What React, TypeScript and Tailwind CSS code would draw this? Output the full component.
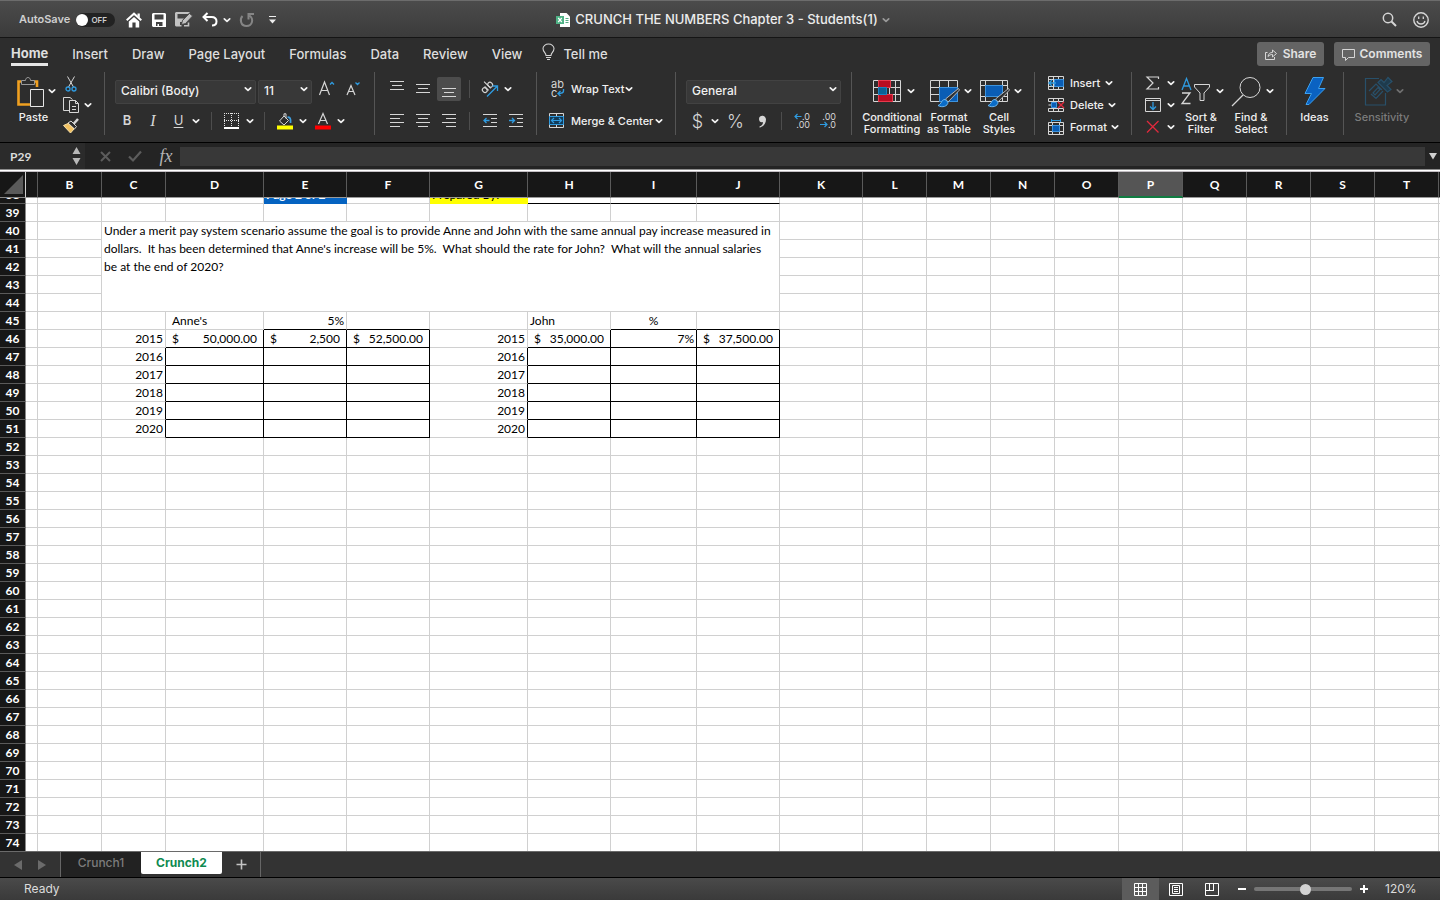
import React, { useState } from 'react';

interface IconProps {
  w: number;
  h: number;
  className?: string;
  children: React.ReactNode;
}

const Icon: React.FC<IconProps> = ({ w, h, className = '', children }) => (
  <svg width={w} height={h} viewBox={`0 0 ${w} ${h}`} fill="none" stroke="#d6d6d6" className={`shrink-0 overflow-visible ${className}`} aria-hidden="true">
    {children}
  </svg>
);

const Chevron: React.FC<{ className?: string; color?: string }> = ({ className = '', color = '#f2f2f2' }) => (
  <Icon w={12} h={8} className={className}>
    <path d="M3.3 2.8 L6 5.4 L8.7 2.8" stroke={color} strokeWidth="1.7" strokeLinecap="round" strokeLinejoin="round" />
  </Icon>
);

const Divider: React.FC<{ className?: string }> = ({ className = '' }) => (
  <span className={`w-px h-[18px] bg-[#4d4d4d] shrink-0 ${className}`} />
);

const Group: React.FC<{ className: string; children: React.ReactNode }> = ({ className, children }) => (
  <div className={`flex shrink-0 h-[63px] pt-[5px] border-[#555] ${className}`}>{children}</div>
);

interface BigButtonProps {
  label: string[];
  icon: React.ReactNode;
  className: string;
  iconClass?: string;
  disabled?: boolean;
}

// tall ribbon button: icon with drop arrow on top, one or two lines of label below
const BigButton: React.FC<BigButtonProps> = ({ label, icon, className, iconClass = '', disabled }) => (
  <button disabled={disabled} className={`flex flex-col shrink-0 items-center ${className}`}>
    <span className={`flex items-start h-[34px] ${iconClass}`}>{icon}</span>
    {label.map((line) => (
      <span key={line} className={`text-[11px] leading-[12px] font-medium whitespace-nowrap ${disabled ? 'text-[#7c7c7c]' : 'text-[#f0f0f0]'}`}>
        {line}
      </span>
    ))}
  </button>
);

const Brush = () => (
  <>
    <path d="M28.5 8.5 L15.5 19 L18 22 L29.5 10 Z" fill="#2d2d2d" stroke="#b5b5b5" />
    <path d="M15 19.5 C11 19.5 12 24 8 25.5 C12 28 18 26.5 18 22 Z" fill="#0a6cc8" stroke="#6cb6ee" />
  </>
);

const TABS = ['Home', 'Insert', 'Draw', 'Page Layout', 'Formulas', 'Data', 'Review', 'View'];

const TitleBar = () => (
  <header className="flex items-center h-[38px] pt-px shrink-0 border-t border-t-[#6c6c6c] border-b border-b-[#151515] bg-gradient-to-b from-[#4b4b4b] to-[#3b3b3b]">
    <div className="flex flex-1 items-center pl-[19px]">
      <span id="autosave" className="w-[57px] text-[11px] font-semibold text-[#cfcfcf]">AutoSave</span>
      <button role="switch" aria-checked="false" aria-labelledby="autosave" className="flex items-center justify-between w-[39px] h-[14px] pr-[8px] rounded-full bg-[#222]">
        <span className="size-[12px] rounded-full bg-white" />
        <span className="text-[8px] font-semibold text-[#cfcfcf]">OFF</span>
      </button>
      <button aria-label="Home" className="ml-[11px]">
        <Icon w={16} h={16}>
          <path d="M0.7 8.2 L8 1.7 L15.3 8.2" stroke="#fff" strokeWidth="2" />
          <path d="M11.500 1.500 H13.800 V6 L11.500 4 Z M2.800 9.500 L8 5 L13.200 9.500 V15.500 H9.600 V10.500 H6.400 V15.500 H2.800 Z" fill="#fff" stroke="none" />
        </Icon>
      </button>
      <button aria-label="Save" className="ml-[10px]">
        <Icon w={14} h={14}>
          <path fillRule="evenodd" d="M1 0 H13 L14 1 V14 H1 L0 13 V1 Z M2.5 1.5 V6.5 H11.5 V1.5 Z M4 9 V13 H5.5 V11 H7 V13 H10.500 V9 Z" fill="#fff" stroke="none" />
        </Icon>
      </button>
      <button aria-label="Save as" className="ml-[9px]">
        <Icon w={18} h={15}>
          <path fillRule="evenodd" d="M1 0 H15 L13 2 H2.500 V6.500 H9 L7 8.500 V10 H5 V13 H6.500 V14.500 H1 L0 13.500 V1 Z" fill="#c2c2c2" stroke="none" />
          <path d="M13.500 10.500 V13.700 H9" stroke="#c2c2c2" strokeWidth="1.600" />
          <path d="M6.500 12.500 L7.500 8.500 L14.500 1.500 L17.500 4 L10.500 11.500 Z" fill="#c2c2c2" stroke="#444" strokeWidth="0.800" />
        </Icon>
      </button>
      <button aria-label="Undo" className="ml-[9px]">
        <Icon w={16} h={15}>
          <path d="M5.500 1 L1.500 5 L5.500 9 M2 5 H9.500 C13 5 14.500 7 14.500 9.500 C14.500 12 13 13.500 10 13.500" stroke="#fff" strokeWidth="2" />
        </Icon>
      </button>
      <button aria-label="Undo history" className="ml-[3px]"><Chevron /></button>
      <button aria-label="Redo" className="ml-[6px]">
        <Icon w={16} h={16}>
          <path d="M3.500 4 C0.500 7 1.500 14 7.500 14 C13.500 14 15 7 10.500 3.500 M9.500 7.500 V2 H15" stroke="#858585" strokeWidth="2" />
        </Icon>
      </button>
      <button aria-label="Customize toolbar" className="ml-[13px]">
        <Icon w={9} h={8}>
          <path d="M1 0.500 H8" stroke="#eee" />
          <path d="M1 3.500 H8 L4.500 7.500 Z" fill="#eee" stroke="none" />
        </Icon>
      </button>
    </div>
    <h1 className="flex items-center text-[13px] font-medium text-[#ececec] whitespace-nowrap">
      <Icon w={14} h={14} className="mr-[5px]">
        <path d="M4 0 H10.500 L14 3.500 V14 H4 Z" fill="#fff" stroke="none" />
        <path d="M9.500 5.500 H12.500 M9.500 7.500 H12.500 M9.500 9.500 H12.500" stroke="#55ab83" />
        <path d="M0 3 H8 V11 H0 Z" fill="#4fb386" stroke="none" />
        <path d="M2.200 5 L5.800 9 M5.800 5 L2.200 9" stroke="#fff" strokeWidth="1.200" />
      </Icon>
      CRUNCH THE NUMBERS Chapter 3 - Students(1)
      <Chevron className="ml-[2px]" color="#9a9a9a" />
    </h1>
    <div className="flex flex-1 items-center justify-end gap-[16px] pr-[11px]">
      <button aria-label="Search">
        <Icon w={15} h={15}>
          <circle cx="6" cy="6" r="4.700" strokeWidth="1.500" />
          <path d="M9.500 9.500 L14 14" strokeWidth="2" />
        </Icon>
      </button>
      <button aria-label="Feedback">
        <Icon w={16} h={16}>
          <circle cx="8" cy="8" r="7.200" strokeWidth="1.400" />
          <path d="M5.700 4.500 V7 M10.300 4.500 V7" strokeWidth="1.300" />
          <path d="M4 9 C5 13 11 13 12 9" strokeWidth="1.300" />
        </Icon>
      </button>
    </div>
  </header>
);

const TabRow: React.FC<{ tab: string; setTab: (tab: string) => void }> = ({ tab, setTab }) => (
  <nav className="flex items-start h-[34px] pt-[4px] pl-[11px] pr-[10px] shrink-0">
    <div className="flex flex-1 gap-6 text-[13px] leading-[23px] text-[#dedede]">
      {TABS.map((name) => (
        <button
          key={name}
          onClick={() => setTab(name)}
          className={`whitespace-nowrap ${tab === name ? 'font-bold border-b-[3px] border-[#e6e6e6] box-content h-[21px]' : 'font-medium h-[24px]'}`}
        >
          {name}
        </button>
      ))}
      <button className="flex items-center gap-[8px] h-[24px] -ml-1 font-medium">
        <Icon w={13} h={18} className="mb-[4px]">
          <path d="M4 12.500 C4 9.500 1 9 1 5.500 C1 3 3.500 1 6.500 1 C9.500 1 12 3 12 5.500 C12 9 9 9.500 9 12.500 Z M4 14.500 H9 M5 16.500 H8" strokeWidth="1.100" />
        </Icon>
        Tell me
      </button>
    </div>
    <div className="flex gap-[10px] text-[12px] font-semibold text-[#e2e2e2]">
      <button className="flex items-center justify-center gap-[6px] w-[67px] h-[24px] rounded-[3px] bg-[#646464]">
        <Icon w={12} h={12}>
          <path d="M2.500 4.500 H0.500 V11.500 H9.500 V9 M3 8.500 C3.500 5.500 5 4.500 7.500 4.500 V2 L11.500 5.500 L7.500 9 V6.500 C5.500 6.500 4.500 7 3 8.500 Z" />
        </Icon>
        Share
      </button>
      <button className="flex items-center justify-center gap-[5px] w-[96px] h-[24px] rounded-[3px] bg-[#646464]">
        <Icon w={13} h={13}>
          <path d="M0.500 1.500 H12.500 V9.500 H6.500 L3.500 12.500 V9.500 H0.500 Z" />
        </Icon>
        Comments
      </button>
    </div>
  </nav>
);

interface SelectProps {
  label: string;
  options: string[];
  className: string;
}

const RibbonSelect: React.FC<SelectProps> = ({ label, options, className }) => (
  <div className={`relative h-[24px] shrink-0 ${className}`}>
    <select aria-label={label} className="appearance-none w-full h-full pl-[5px] pb-[2px] rounded-[2px] border border-[#424242] bg-[#383838] text-[12px] font-medium text-[#f0f0f0]">
      {options.map((o) => <option key={o}>{o}</option>)}
    </select>
    <Chevron className="absolute right-[2px] top-[8px] pointer-events-none" />
  </div>
);

const AlignIcon: React.FC<{ lines: [number, number, number][]; h?: number }> = ({ lines, h = 24 }) => (
  <Icon w={24} h={h}>
    {lines.map(([x1, x2, y]) => <path key={y} d={`M${x1} ${y + 0.5} H${x2}`} />)}
  </Icon>
);

const Ribbon = () => (
  <div className="flex h-[70px] shrink-0 overflow-hidden">
    {/* clipboard */}
    <Group className="w-[105px] border-r">
      <BigButton
        className="w-[57px] pl-[10px]"
        iconClass="w-full pl-[7px]"
        label={['Paste']}
        icon={
          <>
            <Icon w={28} h={31}>
              <path d="M4 4.500 H1.500 V27.500 H13 M17 4.500 H20 V10" stroke="#f0a020" strokeWidth="2.600" />
              <path d="M4.500 7.500 V3.500 H8.500 C8.500 -0.500 13.500 -0.500 13.500 3.500 H17.500 V7.500 Z" fill="#2d2d2d" stroke="#9a9a9a" />
              <path d="M13.500 12.500 H26.500 V29.500 H13.500 Z" fill="#2d2d2d" stroke="#e6e6e6" />
            </Icon>
            <Chevron className="mt-[10px] ml-[1px]" />
          </>
        }
      />
      <div className="flex flex-col items-start w-[47px] pl-[5px] -mt-[4px]">
        <button aria-label="Cut" className="flex items-center shrink-0 h-[21px] pl-[3px]">
          <Icon w={12} h={16}>
            <path d="M2.500 0.500 L8.500 11 M9.500 0.500 L3.500 11" />
            <circle cx="3" cy="13" r="2" stroke="#2f9be0" strokeWidth="1.300" />
            <circle cx="9" cy="13" r="2" stroke="#2f9be0" strokeWidth="1.300" />
          </Icon>
        </button>
        <button aria-label="Copy" className="flex items-center shrink-0 h-[21px] pl-[1px]">
          <Icon w={17} h={17}>
            <path d="M6 14.500 H0.500 V1.500 H7 L9.500 3.500" />
            <path d="M6.500 4.500 H12.500 L15.500 7.500 V16.500 H6.500 Z M12.500 4.500 V7.500 H15.500 M9 10.500 H13 M9 13.500 H13" fill="#2d2d2d" />
          </Icon>
          <Chevron className="ml-[2px]" />
        </button>
        <button aria-label="Format painter" className="flex items-center shrink-0 h-[21px] pl-[1px]">
          <Icon w={16} h={16}>
            <path d="M15 1 L10 6.500" strokeWidth="2.500" />
            <path d="M5 5 L11.500 11 L13.500 8.500 L8 3 Z" fill="#2d2d2d" />
            <path d="M5 5.500 L0.500 7.500 L7.500 15 L11 11 Z" fill="#f3c262" stroke="#f7e0a8" />
          </Icon>
        </button>
      </div>
    </Group>

    {/* font */}
    <Group className="w-[270px] flex-col gap-[8px] pl-[10px] border-r">
      <div className="flex items-center h-[24px]">
        <RibbonSelect label="Font" className="w-[141px]" options={['Calibri (Body)', 'Arial']} />
        <RibbonSelect label="Font size" className="w-[54px] ml-[2px]" options={['11', '12', '14']} />
        <button aria-label="Increase font size" className="flex ml-[7px]">
          <Icon w={16} h={16}>
            <path d="M0.500 14 L5.500 1 L10.500 14 M2.500 9.500 H8.500" strokeWidth="1.200" />
            <path d="M11 3.500 L13 1.500 L15 3.500" stroke="#2f9be0" strokeWidth="1.300" />
          </Icon>
        </button>
        <button aria-label="Decrease font size" className="flex ml-[11px]">
          <Icon w={16} h={16}>
            <path d="M1 14 L5 4.500 L9 14 M2.500 10.500 H7.500" strokeWidth="1.200" />
            <path d="M9.500 1.500 L11.500 3.500 L13.500 1.500" stroke="#2f9be0" strokeWidth="1.300" />
          </Icon>
        </button>
      </div>
      <div className="flex items-center h-[24px] text-[13px] text-[#d6d6d6]">
        <button className="w-[24px] font-semibold">B</button>
        <button className="w-[28px] italic font-['Liberation_Serif',serif] text-[16px]">I</button>
        <button className="w-[23px] underline underline-offset-2">U</button>
        <button aria-label="Underline style"><Chevron /></button>
        <Divider className="ml-[9px]" />
        <button aria-label="Borders" className="ml-[12px]">
          <Icon w={16} h={16}>
            <path d="M0.500 0 V14 M14.500 0 V14 M7.500 0 V14 M0 0.500 H15 M0 7.500 H15" strokeDasharray="1 1" stroke="#e6e6e6" />
            <path d="M0 15 H15" stroke="#fff" strokeWidth="2" />
          </Icon>
        </button>
        <button aria-label="Border style" className="ml-1"><Chevron /></button>
        <Divider className="ml-2" />
        <button aria-label="Fill color" className="ml-3">
          <Icon w={16} h={16}>
            <path d="M7 3 L2.500 8 L7 12 L11.500 7.500 L7 3 V0.800 H9 V5.500" />
            <path d="M10.500 4.500 C13 3.500 14 6 13.500 10" stroke="#3e9fe0" strokeWidth="1.800" />
            <path d="M0 12.500 H16 V16.500 H0 Z" fill="#ff0" stroke="none" />
          </Icon>
        </button>
        <button aria-label="Fill palette" className="ml-1"><Chevron /></button>
        <button aria-label="Font color" className="ml-1.5">
          <Icon w={16} h={16}>
            <path d="M3.500 11 L8 0.500 L12.500 11 M5 7.500 H11" strokeWidth="1.200" />
            <path d="M0 12.500 H16 V16.500 H0 Z" fill="#f00" stroke="none" />
          </Icon>
        </button>
        <button aria-label="Font palette" className="ml-1"><Chevron /></button>
      </div>
    </Group>

    {/* alignment */}
    <Group className="w-[162px] flex-col gap-[8px] pl-[10px] border-r">
      <div className="flex items-center h-[24px]">
        <button aria-label="Top align" className="w-[26px]"><AlignIcon lines={[[5, 19, 4], [7, 17, 8], [5, 19, 12]]} /></button>
        <button aria-label="Middle align" className="w-[26px]"><AlignIcon lines={[[5, 19, 7], [7, 17, 11], [5, 19, 15]]} /></button>
        <button aria-label="Bottom align" className="w-[24px] rounded-[2px] bg-[#4c4c4c]"><AlignIcon lines={[[5, 19, 11], [7, 17, 15], [5, 19, 19]]} /></button>
        <Divider className="ml-[8px]" />
        <button aria-label="Orientation" className="ml-[12px]">
          <Icon w={17} h={17}>
            <g transform="rotate(-45 7 7)" strokeWidth="1.100">
              <ellipse cx="2.500" cy="5.500" rx="2.200" ry="2.600" />
              <path d="M5 2.800 V8.500 M8 -1 V8.500" />
              <ellipse cx="10.200" cy="5.500" rx="2.200" ry="2.600" />
            </g>
            <path d="M5 15.500 L15 5.500 M10.500 5 H15.500 V10" stroke="#2f9be0" strokeWidth="1.300" />
          </Icon>
        </button>
        <button aria-label="Orientation options" className="ml-[3px]"><Chevron /></button>
      </div>
      <div className="flex items-center h-[24px]">
        <button aria-label="Align left" className="w-[26px]"><AlignIcon lines={[[5, 19, 5], [5, 15, 9], [5, 19, 13], [5, 15, 17]]} /></button>
        <button aria-label="Center" className="w-[26px]"><AlignIcon lines={[[5, 19, 5], [7, 17, 9], [5, 19, 13], [7, 17, 17]]} /></button>
        <button aria-label="Align right" className="w-[24px]"><AlignIcon lines={[[5, 19, 5], [9, 19, 9], [5, 19, 13], [9, 19, 17]]} /></button>
        <Divider className="ml-[8px]" />
        <button aria-label="Decrease indent" className="ml-[13px]">
          <Icon w={14} h={14}>
            <path d="M0 0.500 H14 M8 4.500 H14 M8 8.500 H14 M0 12.500 H14" />
            <path d="M6.500 6.500 H1 M3.500 4 L1 6.500 L3.500 9" stroke="#2f9be0" strokeWidth="1.300" />
          </Icon>
        </button>
        <button aria-label="Increase indent" className="ml-[12px]">
          <Icon w={14} h={14}>
            <path d="M0 0.500 H14 M8 4.500 H14 M8 8.500 H14 M0 12.500 H14" />
            <path d="M0 6.500 H5.500 M3 4 L5.500 6.500 L3 9" stroke="#2f9be0" strokeWidth="1.300" />
          </Icon>
        </button>
      </div>
    </Group>

    {/* wrap / merge */}
    <Group className="w-[139px] flex-col items-start gap-[8px] pl-[12px] border-r text-[11px] font-medium text-[#f0f0f0]">
      <button className="flex items-center h-[24px] whitespace-nowrap">
        <span className="relative w-[16px] h-[18px] mr-[6px] text-[11px] leading-[9px] font-normal text-left text-[#d6d6d6]">
          <span className="block pl-[2px]">ab</span>
          <span className="block pl-[2px]">c</span>
          <Icon w={16} h={18} className="absolute inset-0">
            <path d="M14.500 9 V11 C14.500 13 13 13.500 9 13.500 M11.500 11 L9 13.500 L11.500 16" stroke="#2f9be0" strokeWidth="1.400" />
          </Icon>
        </span>
        Wrap Text
        <Chevron className="-ml-px" />
      </button>
      <button className="flex items-center h-[24px] whitespace-nowrap">
        <Icon w={16} h={16} className="mr-[6px]">
          <path d="M0.500 0.500 H14.500 V14.500 H0.500 Z M7.500 0.500 V4 M7.500 11 V14.500" />
          <path d="M0.500 3.500 H14.500 V11.500 H0.500 Z" fill="#123a57" stroke="#2f9be0" />
          <path d="M2.500 7.500 H12.500 M5 5 L2.500 7.500 L5 10 M10 5 L12.500 7.500 L10 10" stroke="#2f9be0" strokeWidth="1.200" />
        </Icon>
        Merge &amp; Center
        <Chevron />
      </button>
    </Group>

    {/* number */}
    <Group className="w-[176px] flex-col gap-[8px] pl-[10px] border-r">
      <RibbonSelect label="Number format" className="w-[155px]" options={['General', 'Currency', 'Percentage']} />
      <div className="flex items-center h-[24px] text-[#d6d6d6] text-[18px] font-light">
        <button className="w-[23px]">$</button>
        <button aria-label="Currency options"><Chevron /></button>
        <button className="w-[29px] text-center">%</button>
        <button aria-label="Comma style" className="ml-[8px]">
          <Icon w={9} h={13}>
            <path d="M1 4 C1 -0.500 8 -0.500 8 4.500 C8 9 5 12 1.500 12.500 V11.500 C4 10.500 5 9 5 7 C3 8 1 6.500 1 4 Z" fill="#d6d6d6" stroke="none" />
          </Icon>
        </button>
        <Divider className="ml-[14px]" />
        <button aria-label="Increase decimal" className="relative flex flex-col items-end w-[16px] ml-[12px] text-[9px] leading-[8px] font-normal">
          <span>.0</span>
          <span>.00</span>
          <Icon w={16} h={16} className="absolute inset-0">
            <path d="M7.500 3.500 H1 M3.500 1 L1 3.500 L3.500 6" stroke="#2f9be0" strokeWidth="1.200" />
          </Icon>
        </button>
        <button aria-label="Decrease decimal" className="relative flex flex-col items-end w-[16px] ml-[10px] text-[9px] leading-[8px] font-normal">
          <span>.00</span>
          <span>.0</span>
          <Icon w={16} h={16} className="absolute inset-0">
            <path d="M0 11.500 H7 M4.500 9 L7 11.500 L4.500 14" stroke="#2f9be0" strokeWidth="1.200" />
          </Icon>
        </button>
      </div>
    </Group>

    {/* styles */}
    <Group className="w-[183px] pl-[8px] border-r">
      <BigButton
        className="w-[64px]"
        iconClass="pl-[6px] pt-[3px]"
        label={['Conditional', 'Formatting']}
        icon={
          <>
            <Icon w={28} h={22}>
              <path d="M0.500 0.500 H27.500 V21.500 H0.500 Z M0 7.500 H28 M0 14.500 H28 M5.500 0 V22 M16.500 0 V22 M22.500 0 V22" />
              <path d="M5.500 0.500 H17.500 V7.500 H5.500 Z M5.500 14.500 H19.500 V21.500 H5.500 Z" fill="#b80d22" stroke="#e8394c" />
              <path d="M5.500 7.500 H13.500 V14.500 H5.500 Z" fill="#0c6295" stroke="#1b83c0" />
            </Icon>
            <Chevron className="mt-[7px] ml-[4px]" />
          </>
        }
      />
      <BigButton
        className="w-[50px]"
        iconClass="pl-[6px] pt-[3px]"
        label={['Format', 'as Table']}
        icon={
          <>
            <Icon w={31} h={27}>
              <path d="M0.500 0.500 H27.500 V21.500 H0.500 Z M0 7.500 H28 M0 14.500 H28 M9.500 0 V22 M18.500 0 V22" />
              <path d="M9.500 7.500 H27.500 V21.500 H9.500 Z" fill="#0a5db5" stroke="#3d93dd" />
              <Brush />
            </Icon>
            <Chevron className="mt-[7px] ml-[1px]" />
          </>
        }
      />
      <BigButton
        className="w-[50px]"
        iconClass="pl-[6px] pt-[3px]"
        label={['Cell', 'Styles']}
        icon={
          <>
            <Icon w={31} h={27}>
              <path d="M0.500 0.500 H27.500 V21.500 H0.500 Z M0 5.500 H28 M0 16.500 H28 M5.500 0 V22 M22.500 0 V22" />
              <path d="M5.500 5.500 H22.500 V16.500 H5.500 Z" fill="#0a5db5" stroke="#3d93dd" />
              <Brush />
            </Icon>
            <Chevron className="mt-[7px] ml-[1px]" />
          </>
        }
      />
    </Group>

    {/* cells */}
    <Group className="w-[96px] pl-[13px]">
      <div className="flex flex-col items-start -mt-[5px] text-[11px] font-medium text-[#f0f0f0]">
        <button className="flex items-center shrink-0 h-[22px]">
          <Icon w={16} h={14} className="mr-[6px]">
            <path d="M0.500 0.500 H15.500 V13.500 H0.500 Z M5.500 0 V14 M10.500 0 V14 M0 3.500 H16 M0 10.500 H16" />
            <path d="M6.500 3.500 H15.500 V10.500 H6.500 Z" fill="#0a5db5" stroke="#3d93dd" />
            <path d="M8 7 H1 M4 4 L1 7 L4 10" stroke="#2f9be0" strokeWidth="1.400" />
          </Icon>
          Insert
          <Chevron className="ml-[3px]" />
        </button>
        <button className="flex items-center shrink-0 h-[22px]">
          <Icon w={16} h={14} className="mr-[6px]">
            <path d="M0.500 0.500 H15.500 V3.500 H0.500 Z M0.500 10.500 H15.500 V13.500 H0.500 Z M5.500 0 V4 M10.500 0 V4 M5.500 10 V14 M10.500 10 V14 M0.500 7 H4" />
            <path d="M3.500 4.500 H8.500 V9.500 H3.500 Z" fill="#0a5db5" stroke="#3d93dd" />
            <path d="M10 4 L16 10 M16 4 L10 10" stroke="#e0293d" strokeWidth="1.400" />
          </Icon>
          Delete
          <Chevron className="ml-[2px]" />
        </button>
        <button className="flex items-center shrink-0 h-[22px]">
          <Icon w={16} h={16} className="mr-[6px]">
            <path d="M0.500 3.500 H15.500 V15.500 H0.500 Z M4.500 3 V16 M11.500 3 V16 M0 6.500 H16 M0 12.500 H16" />
            <path d="M4.500 6.500 H11.500 V12.500 H4.500 Z" fill="#0a5db5" stroke="#3d93dd" />
            <path d="M3.500 1.500 H12.500 M3.500 0 V3 M12.500 0 V3" stroke="#2f9be0" />
          </Icon>
          Format
          <Chevron className="ml-[2px]" />
        </button>
      </div>
    </Group>

    {/* editing */}
    <Group className="w-[156px] pl-[13px] border-x">
      <div className="flex flex-col w-[33px] pr-px -mt-[5px]">
        <button aria-label="AutoSum" className="flex items-center justify-between shrink-0 h-[22px]">
          <Icon w={16} h={14}>
            <path d="M13.500 3 V1 H2 L8 7 L2 13 H13.500 V11" strokeWidth="1.200" />
          </Icon>
          <Chevron />
        </button>
        <button aria-label="Fill" className="flex items-center justify-between shrink-0 h-[22px]">
          <Icon w={16} h={14}>
            <path d="M0.500 0.500 H15.500 V13.500 H0.500 Z M0 2.500 H16" />
            <path d="M8 4 V11.500 M5 8.500 L8 11.500 L11 8.500" stroke="#2f9be0" strokeWidth="1.300" />
          </Icon>
          <Chevron />
        </button>
        <button aria-label="Clear" className="flex items-center justify-between shrink-0 h-[22px]">
          <Icon w={16} h={14}>
            <path d="M2 1 L13.500 12.500 M13.500 1 L2 12.500" stroke="#e0293d" strokeWidth="1.300" />
          </Icon>
          <Chevron />
        </button>
      </div>
      <BigButton
        className="w-[46px]"
        iconClass="pl-[4px]"
        label={['Sort &', 'Filter']}
        icon={
          <>
            <Icon w={30} h={28}>
              <path d="M1 13 L5.500 1.500 L10 13 M2.500 9 H8.500" stroke="#2f9be0" strokeWidth="1.300" />
              <path d="M1 16 H9 L1 26.500 H9.500" strokeWidth="1.300" />
              <path d="M13.500 7.500 H28.500 V10 L23 16 V23.500 H19 V16 L13.500 10 Z" />
            </Icon>
            <Chevron className="mt-[10px] ml-[3px]" />
          </>
        }
      />
      <BigButton
        className="w-[54px]"
        iconClass="pl-[5px]"
        label={['Find &', 'Select']}
        icon={
          <>
            <Icon w={30} h={30}>
              <circle cx="18" cy="10.500" r="10" />
              <path d="M11 18 L0 29" strokeWidth="1.300" />
            </Icon>
            <Chevron className="mt-[10px] ml-[2px]" />
          </>
        }
      />
    </Group>

    {/* ideas */}
    <Group className="w-[57px] border-r">
      <BigButton
        className="w-[55px]"
        label={['Ideas']}
        icon={
          <Icon w={22} h={29}>
            <path d="M9 0.500 H19.500 L14.500 11.500 H21 L5 27.500 H2 L7.500 16.500 H1 Z" fill="#0a62c2" stroke="#3ba1f0" />
          </Icon>
        }
      />
    </Group>

    {/* sensitivity */}
    <Group className="w-[77px]">
      <BigButton
        className="w-[76px]"
        iconClass="pl-[6px]"
        label={['Sensitivity']}
        disabled
        icon={
          <>
            <Icon w={28} h={29}>
              <g stroke="#28506a" strokeWidth="1.200">
                <path d="M14 1.500 H0.500 V28 H20.500 V16" />
                <path d="M4 14 L11 7 L17 13 M6 17 L11 21.500 L18 14 M8 16 L13 10.500 L15 12.500 L10 18 Z" />
                <path d="M13 5.500 L16 2.500 L19 5.500 L23 0.500 L27 4.500 L22 8.500 L26 12.500 L22.500 15 Z" fill="#1e3b4d" />
              </g>
            </Icon>
            <Chevron className="mt-[10px] ml-[1px]" color="#707070" />
          </>
        }
      />
    </Group>
  </div>
);

const FormulaBar = () => (
  <div className="flex items-center h-[27px] shrink-0 border-t border-black bg-[#242424]">
    <div className="flex items-center w-[85px] h-full pl-[10px] pr-[3px] bg-[#2b2b2b]">
      <input aria-label="Name box" defaultValue="P29" className="w-[62px] h-[18px] pt-[2px] bg-transparent text-[12px] font-['Lato','Open_Sans',sans-serif] font-bold text-[#dcdcdc] outline-none" />
      <Icon w={9} h={20}>
        <path d="M4.500 1 L8.500 8 H0.500 Z M4.500 19 L8.500 12 H0.500 Z" fill="#b8b8b8" stroke="none" />
      </Icon>
    </div>
    <button aria-label="Cancel" className="ml-[15px]">
      <Icon w={11} h={11}><path d="M1 1 L10 10 M10 1 L1 10" stroke="#5c5c5c" strokeWidth="2" /></Icon>
    </button>
    <button aria-label="Enter" className="ml-[17px]">
      <Icon w={14} h={12}><path d="M1 6.500 L5 10.500 L13 1.500" stroke="#5c5c5c" strokeWidth="2.200" /></Icon>
    </button>
    <button aria-label="Insert function" className="w-[38px] pl-[10px] font-['Liberation_Serif',serif] italic text-[18px] leading-[20px] text-[#b4b4b4]">fx</button>
    <input aria-label="Formula" className="flex-1 min-w-0 h-[19px] px-1 bg-[#383838] text-[12px] text-white outline-none" />
    <button aria-label="Expand formula bar" className="flex justify-center w-[15px]">
      <Icon w={8} h={8}><path d="M0 1 H8 L4 7.500 Z" fill="#d0d0d0" stroke="none" /></Icon>
    </button>
  </div>
);

type Cell = {
  text?: string;
  money?: string;
  cls?: string;
};

const COLUMNS: { name: string; width: number }[] = [
  { name: '', width: 12 },
  { name: 'B', width: 64 },
  { name: 'C', width: 64 },
  { name: 'D', width: 98 },
  { name: 'E', width: 83 },
  { name: 'F', width: 83 },
  { name: 'G', width: 98 },
  { name: 'H', width: 83 },
  { name: 'I', width: 86 },
  { name: 'J', width: 83 },
  { name: 'K', width: 83 },
  { name: 'L', width: 64 },
  { name: 'M', width: 64 },
  { name: 'N', width: 64 },
  { name: 'O', width: 64 },
  { name: 'P', width: 64 },
  { name: 'Q', width: 64 },
  { name: 'R', width: 64 },
  { name: 'S', width: 64 },
  { name: 'T', width: 64 },
];

const CELLS: Record<string, Cell> = {
  D45: { text: "Anne's", cls: 'pl-[6px]' },
  E45: { text: '5%', cls: 'text-right pr-[2px]' },
  H45: { text: 'John', cls: 'pl-[2px]' },
  I45: { text: '%', cls: 'text-center' },
  D46: { money: '50,000.00' },
  E46: { money: '2,500' },
  F46: { money: '52,500.00' },
  H46: { money: '35,000.00' },
  I46: { text: '7%', cls: 'text-right pr-[2px]' },
  J46: { money: '37,500.00' },
};

for (let row = 46; row <= 51; row++) {
  CELLS[`C${row}`] = { text: String(row + 1969), cls: 'text-right pr-[2px]' };
  CELLS[`G${row}`] = { text: String(row + 1969), cls: 'text-right pr-[2px]' };
}

const ROWS = Array.from({ length: 36 }, (_, i) => i + 39);

const rightLine = (col: string, row: number) => {
  if (row < 46 || row > 51) return false;
  if (col === 'C' || col === 'G') return row > 46;
  return col !== '' && 'DEFHIJ'.includes(col);
};

const bottomLine = (col: string, row: number) => {
  if (col === '' || row < 45 || row > 51) return false;
  if (col === 'D' || col === 'H') return row > 45;
  return 'EFIJ'.includes(col);
};

const rowHead = 'p-0 border-r border-b border-r-[#8a8a8a] border-b-[#5a5a5a] bg-[#171717] text-white font-bold';

const Sheet = () => (
  <div className="flex-1 min-h-0 overflow-hidden bg-white">
    <table className="table-fixed w-full min-w-[1439px] border-separate border-spacing-0 font-['Lato','Open_Sans',sans-serif] text-[12px] leading-[17px] text-black">
      <colgroup>
        <col style={{ width: 26 }} />
        {COLUMNS.map((c) => <col key={c.name} style={{ width: c.width }} />)}
        <col />
      </colgroup>
      <thead>
        <tr className="h-[26px]">
          <th className="p-0 border-r border-b border-r-[#d0d0d0] border-b-[#8a8a8a] bg-[#171717]">
            <Icon w={20} h={20} className="ml-[4px]"><path d="M19 0 V19 H0 Z" fill="#5a5a5a" stroke="none" /></Icon>
          </th>
          {COLUMNS.map((c) => (
            <th
              key={c.name}
              className={`p-0 text-white font-bold border-r border-r-[#5a5a5a] ${c.name === 'P' ? 'bg-[#555] border-b-2 border-b-[#107c41]' : 'bg-[#171717] border-b border-b-[#9a9a9a]'}`}
            >
              {c.name}
            </th>
          ))}
          <th className="p-0 bg-[#171717] border-b border-b-[#9a9a9a]" />
        </tr>
      </thead>
      <tbody>
        {/* row 38 is scrolled mostly under the header */}
        <tr className="h-[6px]">
          <th className={rowHead}>
            <div className="flex flex-col items-center justify-end h-[5px] overflow-hidden"><span>38</span></div>
          </th>
          {COLUMNS.map((c) => (
            <td
              key={c.name}
              className={`p-0 border-r border-b ${
                c.name === 'E'
                  ? 'bg-[#0563c1] border-[#0563c1] text-white font-bold'
                  : c.name === 'G'
                    ? 'bg-[#ff0] border-[#ff0]'
                    : 'HIJ'.includes(c.name) && c.name !== ''
                      ? 'border-r-[#d0d0d0] border-b-black'
                      : 'border-[#d0d0d0]'
              }`}
            >
              <div className="flex flex-col justify-end h-[5px] pl-[2px] overflow-hidden whitespace-nowrap">
                {c.name === 'E' && <span>Page 2 of 2</span>}
                {c.name === 'G' && <span>Prepared By:</span>}
              </div>
            </td>
          ))}
          <td className="p-0 border-b border-[#d0d0d0]" />
        </tr>
        {ROWS.map((row) => (
          <tr key={row} className="h-[18px]">
            <th className={rowHead}>{row}</th>
            {COLUMNS.map((c) => {
              const merged = row >= 40 && row <= 44 && c.name !== '' && 'CDEFGHIJ'.includes(c.name);
              if (merged) {
                if (row !== 40 || c.name !== 'C') return null;
                return (
                  <td key={c.name} colSpan={8} rowSpan={5} className="p-0 pl-[2px] align-top border-r border-b border-[#d0d0d0] leading-[18px] whitespace-pre">
                    {'Under a merit pay system scenario assume the goal is to provide Anne and John with the same annual pay increase measured in\n'}
                    {"dollars.  It has been determined that Anne's increase will be 5%.  What should the rate for John?  What will the annual salaries\n"}
                    {'be at the end of 2020?'}
                  </td>
                );
              }
              const cell = CELLS[`${c.name}${row}`];
              return (
                <td
                  key={c.name}
                  className={`p-0 border-r border-b ${rightLine(c.name, row) ? 'border-r-black' : 'border-r-[#d0d0d0]'} ${bottomLine(c.name, row) ? 'border-b-black' : 'border-b-[#d0d0d0]'} ${cell?.cls ?? ''}`}
                >
                  {cell?.money ? (
                    <div className="flex justify-between px-[6px]"><span>$</span><span>{cell.money}</span></div>
                  ) : (
                    cell?.text
                  )}
                </td>
              );
            })}
            <td className="p-0 border-b border-[#d0d0d0]" />
          </tr>
        ))}
      </tbody>
    </table>
  </div>
);

const SheetTabs = () => (
  <div className="flex items-start h-[26px] shrink-0 border-t border-[#6a6a6a] bg-[#333] text-[12px]">
    <div className="flex items-center gap-[14px] w-[61px] h-[25px] pl-[14px] border-r border-[#666]">
      <button aria-label="Previous sheet"><Icon w={9} h={12}><path d="M8 1 V11 L0 6 Z" fill="#6b6b6b" stroke="none" /></Icon></button>
      <button aria-label="Next sheet"><Icon w={9} h={12}><path d="M1 1 V11 L9 6 Z" fill="#6b6b6b" stroke="none" /></Icon></button>
    </div>
    <button className="w-[80px] h-[25px] pb-[3px] bg-[#222] font-medium text-[#7c7c7c]">Crunch1</button>
    <button className="w-[81px] h-[22px] rounded-b-[2px] bg-white font-bold text-[#0f8a50]">Crunch2</button>
    <button aria-label="Add sheet" className="flex items-center justify-center w-[39px] h-[25px] border-r border-[#666]">
      <Icon w={11} h={11}><path d="M5.500 0.500 V10.500 M0.500 5.500 H10.500" stroke="#c4c4c4" strokeWidth="1.600" /></Icon>
    </button>
  </div>
);

const StatusBar = () => {
  const [zoom, setZoom] = useState(53);

  return (
    <footer className="flex items-center h-[23px] shrink-0 border-t border-black bg-gradient-to-b from-[#4a4a4a] to-[#3a3a3a] text-[12px] text-[#dcdcdc]">
      <span className="flex-1 pl-[24px]">Ready</span>
      <button aria-label="Normal view" className="flex items-center justify-center w-[37px] h-full bg-[#5c5c5c]">
        <Icon w={13} h={13}><path d="M0.500 0.500 H12.500 V12.500 H0.500 Z M4.500 0 V13 M8.500 0 V13 M0 4.500 H13 M0 8.500 H13" stroke="#fff" /></Icon>
      </button>
      <button aria-label="Page layout view" className="ml-[10px]">
        <Icon w={14} h={13}><path d="M0.500 0.500 H13.500 V12.500 H0.500 Z M3.500 2.500 H10.500 V10.500 H3.500 Z M5 4.500 H9 M5 6.500 H9 M5 8.500 H9" stroke="#fff" /></Icon>
      </button>
      <button aria-label="Page break view" className="ml-[22px]">
        <Icon w={14} h={13}><path d="M0.500 0.500 H13.500 V12.500 H0.500 Z M4.500 0 V7.500 M8.500 0 V7.500 M0 7.500 H9" stroke="#fff" /></Icon>
      </button>
      <button aria-label="Zoom out" className="ml-[19px]">
        <Icon w={8} h={8}><path d="M0 4 H8" stroke="#fff" strokeWidth="2" /></Icon>
      </button>
      <input
        type="range"
        aria-label="Zoom"
        value={zoom}
        onChange={(e) => setZoom(Number(e.target.value))}
        className="appearance-none w-[98px] h-[4px] ml-[8px] rounded-full bg-[#767676] [&::-webkit-slider-thumb]:appearance-none [&::-webkit-slider-thumb]:size-[11px] [&::-webkit-slider-thumb]:rounded-full [&::-webkit-slider-thumb]:bg-[#d4d4d4]"
      />
      <button aria-label="Zoom in" className="ml-[8px]">
        <Icon w={8} h={8}><path d="M0 4 H8 M4 0 V8" stroke="#fff" strokeWidth="2" /></Icon>
      </button>
      <span className="w-[55px] ml-[17px]">120%</span>
    </footer>
  );
};

export default function App() {
  const [tab, setTab] = useState('Home');

  return (
    <div className="flex flex-col h-screen overflow-hidden bg-[#2d2d2d] font-['Inter','Roboto',sans-serif]">
      <TitleBar />
      <TabRow tab={tab} setTab={setTab} />
      <Ribbon />
      <FormulaBar />
      <div className="h-[3px] shrink-0 border-y border-t-[#8c8c8c] border-b-[#c4bfc4] bg-white" />
      <Sheet />
      <SheetTabs />
      <StatusBar />
    </div>
  );
}
